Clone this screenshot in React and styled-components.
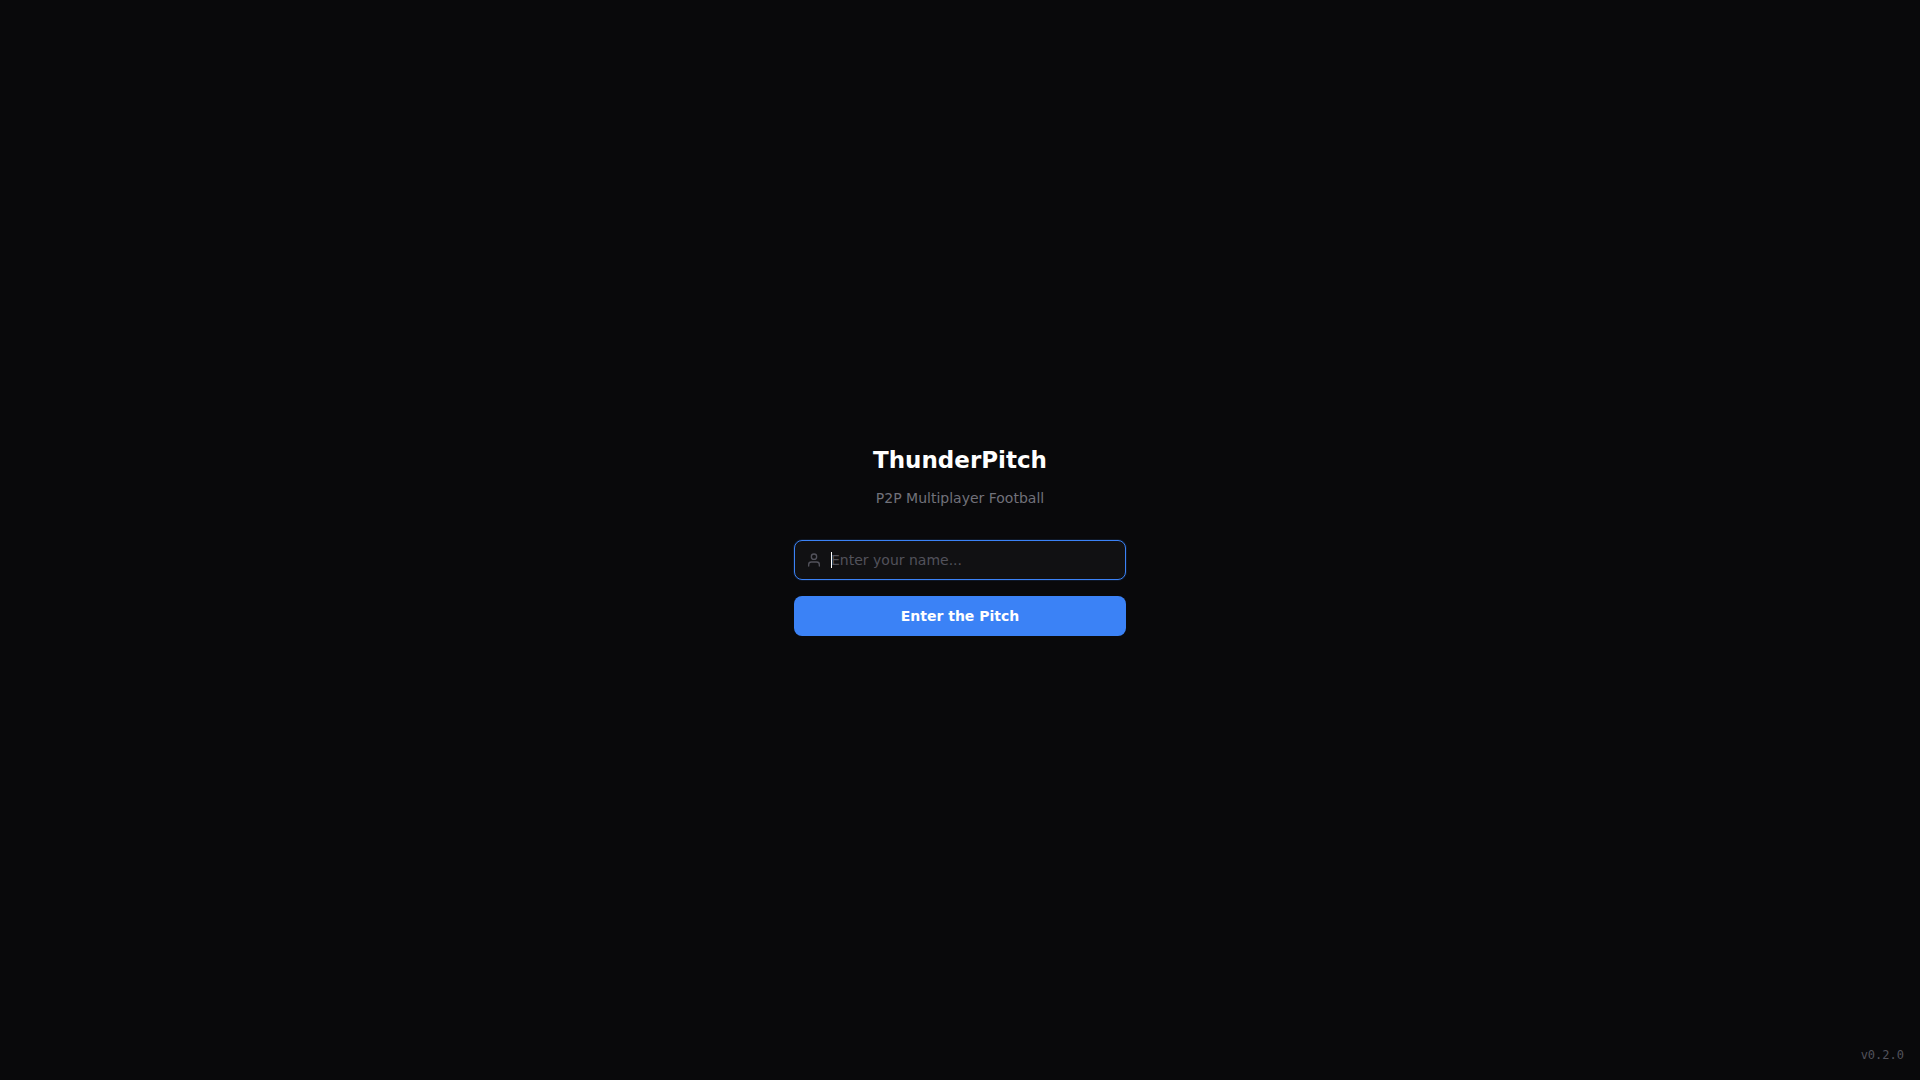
import React, { useState } from "react";
import styled, { createGlobalStyle } from "styled-components";

const GlobalStyle = createGlobalStyle`
  *, *::before, *::after { box-sizing: border-box; }
  body {
    margin: 0;
    background: #09090b;
    color: #fafafa;
    font-family: "DejaVu Sans", sans-serif;
    font-size: 14px;
    line-height: 20px;
  }
`;

const Page = styled.div`
  min-height: 100vh;
  display: grid;
  grid-template-rows: 1fr auto 1fr;
  justify-items: center;
`;

const Panel = styled.main`
  grid-row: 2;
  width: 100%;
  max-width: 380px;
  padding: 0 24px;
  display: flex;
  flex-direction: column;
  gap: 32px;
`;

const Header = styled.header`
  display: flex;
  flex-direction: column;
  gap: 12px;
  text-align: center;
`;

const Title = styled.h1`
  margin: 0;
  font-size: 23px;
  line-height: 32px;
  font-weight: 700;
  color: #ffffff;
`;

const Subtitle = styled.p`
  margin: 0;
  color: #71717a;
`;

const Form = styled.form`
  display: flex;
  flex-direction: column;
  gap: 16px;
`;

const Field = styled.label`
  display: flex;
  align-items: center;
  height: 40px;
  padding: 0 11px;
  gap: 9px;
  border: 1px solid #27272a;
  border-radius: 8px;
  background: #111113;
  color: #52525b;

  &:focus-within {
    border-color: #3b82f6;
    box-shadow: 0 0 0 1px rgba(59, 130, 246, 0.12);
  }
`;

const FieldIcon = styled.svg`
  flex: none;
  width: 16px;
  height: 16px;
`;

const InputArea = styled.span`
  position: relative;
  flex: 1;
  min-width: 0;
  display: flex;
`;

const NameInput = styled.input`
  flex: 1;
  min-width: 0;
  padding: 0;
  border: 0;
  outline: 0;
  background: transparent;
  color: #fafafa;
  caret-color: ${(props) => (props.value ? "#fafafa" : "transparent")};
  font: inherit;

  &::placeholder { color: #52525b; opacity: 1; }
`;

const Caret = styled.span`
  position: absolute;
  top: 2px;
  left: 0;
  width: 1px;
  height: 16px;
  background: #ffffff;
  visibility: hidden;

  ${NameInput}:focus + & { visibility: visible; }
`;

const SubmitButton = styled.button`
  height: 40px;
  border: 0;
  border-radius: 8px;
  background: #3b82f6;
  color: #ffffff;
  font: inherit;
  font-weight: 700;
  cursor: pointer;
`;

const Footer = styled.footer`
  grid-row: 3;
  justify-self: end;
  align-self: end;
  padding: 16px;
  font-family: "DejaVu Sans Mono", monospace;
  font-size: 12px;
  line-height: 18px;
  color: #52525b;
`;

function UserIcon() {
  return (
    <FieldIcon
      viewBox="0 0 24 24"
      fill="none"
      stroke="currentColor"
      strokeWidth="2"
      strokeLinecap="round"
      strokeLinejoin="round"
      aria-hidden="true"
    >
      <path d="M20 21v-2a4 4 0 0 0-4-4H8a4 4 0 0 0-4 4v2" />
      <circle cx="12" cy="7" r="4" />
    </FieldIcon>
  );
}

export default function App() {
  const [name, setName] = useState("");

  return (
    <>
      <GlobalStyle />
      <Page>
        <Panel>
          <Header>
            <Title>ThunderPitch</Title>
            <Subtitle>P2P Multiplayer Football</Subtitle>
          </Header>
          <Form onSubmit={(event) => event.preventDefault()}>
            <Field htmlFor="player-name">
              <UserIcon />
              <InputArea>
                <NameInput
                  id="player-name"
                  type="text"
                  aria-label="Enter your name"
                  placeholder="Enter your name..."
                  autoComplete="off"
                  autoFocus
                  value={name}
                  onChange={(event) => setName(event.target.value)}
                />
                {name === "" && <Caret aria-hidden="true" />}
              </InputArea>
            </Field>
            <SubmitButton type="submit">Enter the Pitch</SubmitButton>
          </Form>
        </Panel>
        <Footer>v0.2.0</Footer>
      </Page>
    </>
  );
}
